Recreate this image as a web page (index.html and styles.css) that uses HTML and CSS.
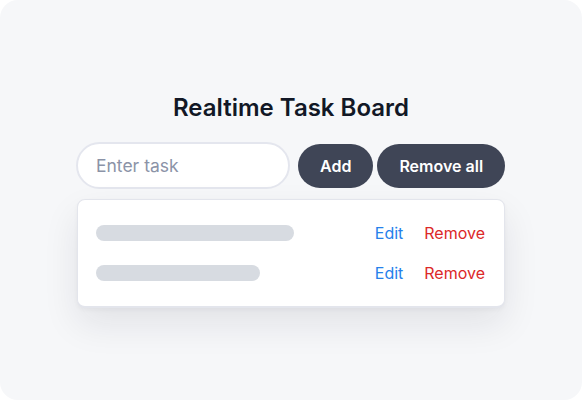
FILE: index.html
```html
<!DOCTYPE html>
<html>
<head>
<meta charset="utf-8">
<link rel="stylesheet" href="styles.css">
</head>
<body>
<div class="frame">
  <h1 class="title">Realtime Task Board</h1>
  <div class="controls">
    <input class="task-input" type="text" placeholder="Enter task">
    <div class="buttons">
      <button class="btn">Add</button>
      <button class="btn">Remove all</button>
    </div>
  </div>
  <div class="list">
    <div class="row">
      <span class="bar bar-long"></span>
      <div class="actions">
        <a class="link edit">Edit</a>
        <a class="link remove">Remove</a>
      </div>
    </div>
    <div class="row">
      <span class="bar bar-short"></span>
      <div class="actions">
        <a class="link edit">Edit</a>
        <a class="link remove">Remove</a>
      </div>
    </div>
  </div>
</div>
</body>
</html>
```
FILE: styles.css
```css
* { box-sizing: border-box; }
html, body { margin: 0; padding: 0; background: #ffffff; }
body { font-family: Inter, "Noto Sans", sans-serif; }
.frame {
  width: 582px;
  height: 400px;
  background: #f6f7f9;
  border-radius: 18px;
  display: flex;
  flex-direction: column;
  align-items: center;
  padding-top: 94px;
}
.title {
  margin: 0;
  font-size: 24px;
  font-weight: 600;
  color: #121826;
  line-height: 28px;
  letter-spacing: 0;
}
.controls {
  margin-top: 20px;
  display: flex;
  align-items: center;
  width: 430px;
}
.task-input {
  width: 214px;
  height: 47px;
  border: 2px solid #e4e6ee;
  border-radius: 24px;
  background: #ffffff;
  padding: 0 18px;
  font-family: Inter, sans-serif;
  font-size: 17.5px;
  color: #121826;
  outline: none;
  margin-right: 8px;
}
.task-input::placeholder { color: #8b93a7; }
.buttons { display: flex; gap: 4px; }
.btn {
  height: 44px;
  border: none;
  border-radius: 22px;
  background: #3f4556;
  color: #ffffff;
  font-family: Inter, sans-serif;
  font-size: 16px;
  font-weight: 600;
  padding: 0 22px;
}
.list {
  margin-top: 10px;
  width: 428px;
  background: #ffffff;
  border: 1px solid #e3e5ec;
  border-bottom-width: 2px;
  border-radius: 8px;
  box-shadow: 0 16px 36px rgba(20, 24, 40, 0.09), 0 2px 4px rgba(20, 24, 40, 0.04);
  padding: 21px 19px 21px 18px;
  display: flex;
  flex-direction: column;
  gap: 16px;
}
.row {
  display: flex;
  align-items: center;
  justify-content: space-between;
  height: 24px;
}
.bar {
  display: block;
  height: 16px;
  border-radius: 8px;
  background: #d7dbe1;
}
.bar-long { width: 198px; }
.bar-short { width: 164px; }
.actions { display: flex; gap: 21px; }
.link {
  font-size: 16px;
  line-height: 24px;
}
.edit { color: #2580eb; }
.remove { color: #dc2828; }
```
